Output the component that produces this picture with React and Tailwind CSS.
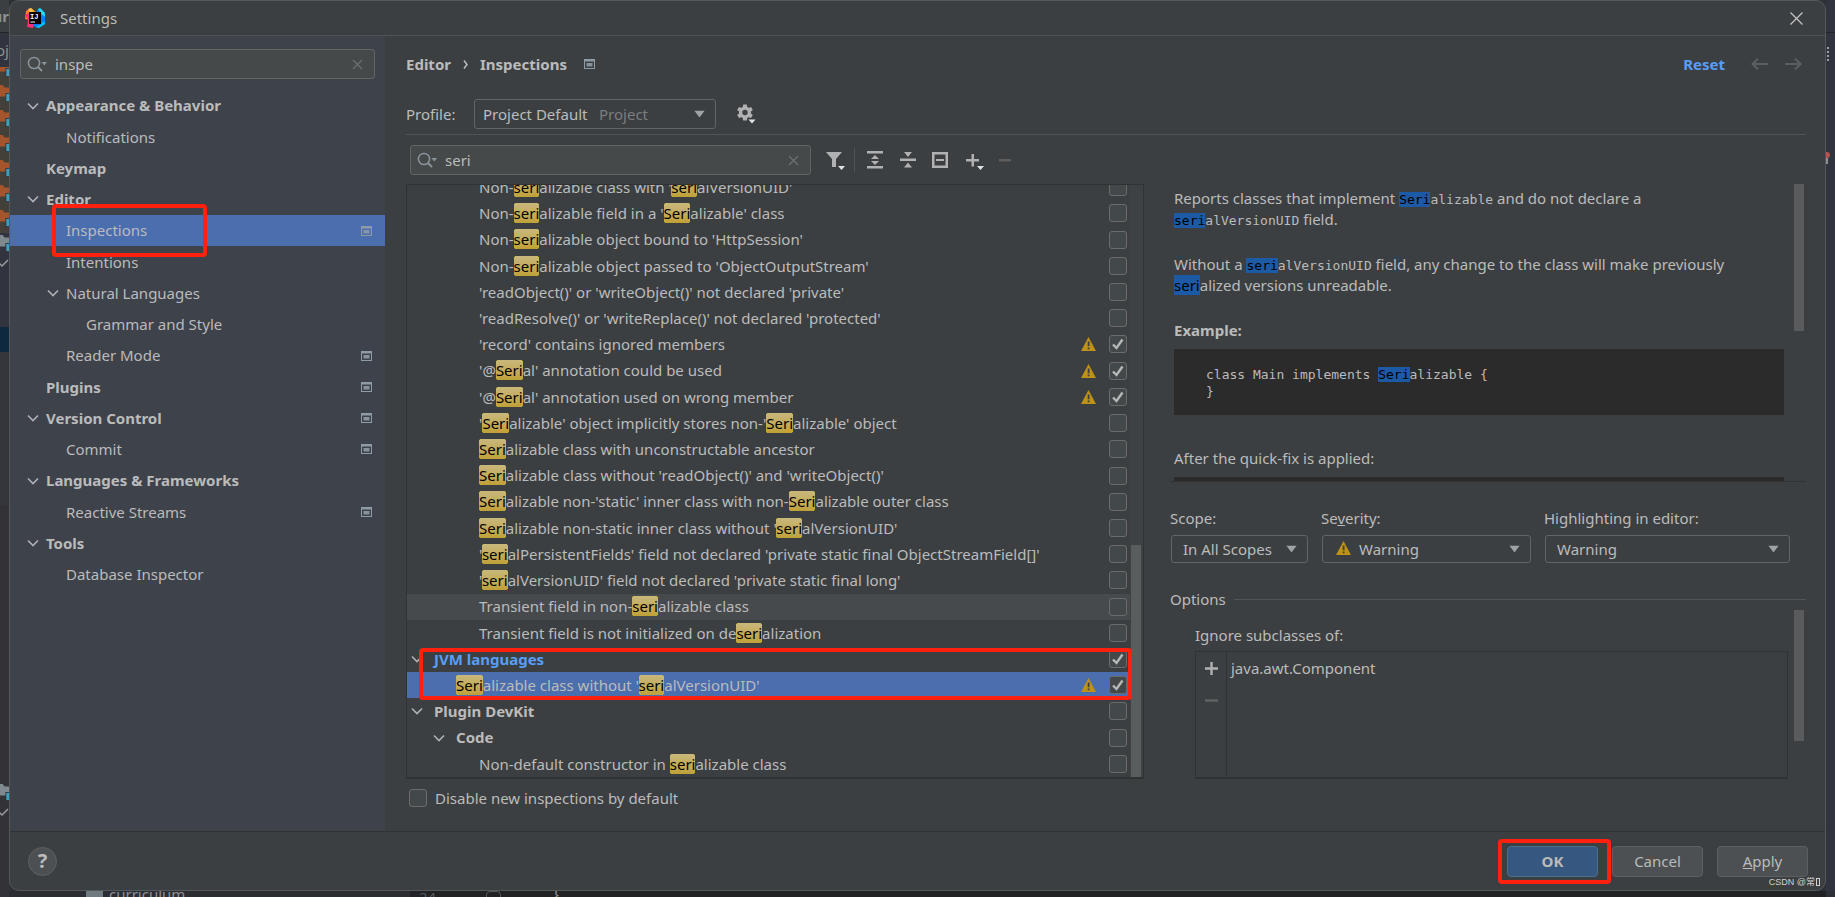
import React from "react";

const settingsTree = [
  { label: "Appearance & Behavior", level: 0, open: true, bold: true },
  { label: "Notifications", level: 1 },
  { label: "Keymap", level: 0, bold: true },
  { label: "Editor", level: 0, open: true, bold: true },
  { label: "Inspections", level: 1, project: true, selected: true },
  { label: "Intentions", level: 1 },
  { label: "Natural Languages", level: 1, open: true },
  { label: "Grammar and Style", level: 2 },
  { label: "Reader Mode", level: 1, project: true },
  { label: "Plugins", level: 0, bold: true, project: true },
  { label: "Version Control", level: 0, open: true, bold: true, project: true },
  { label: "Commit", level: 1, project: true },
  { label: "Languages & Frameworks", level: 0, open: true, bold: true },
  { label: "Reactive Streams", level: 1, project: true },
  { label: "Tools", level: 0, open: true, bold: true },
  { label: "Database Inspector", level: 1 },
];

const inspections = [
  { label: "Non-serializable class with 'serialVersionUID'", level: 2 },
  { label: "Non-serializable field in a 'Serializable' class", level: 2 },
  { label: "Non-serializable object bound to 'HttpSession'", level: 2 },
  { label: "Non-serializable object passed to 'ObjectOutputStream'", level: 2 },
  { label: "'readObject()' or 'writeObject()' not declared 'private'", level: 2 },
  { label: "'readResolve()' or 'writeReplace()' not declared 'protected'", level: 2 },
  { label: "'record' contains ignored members", level: 2, warning: true, checked: true },
  { label: "'@Serial' annotation could be used", level: 2, warning: true, checked: true },
  { label: "'@Serial' annotation used on wrong member", level: 2, warning: true, checked: true },
  { label: "'Serializable' object implicitly stores non-'Serializable' object", level: 2 },
  { label: "Serializable class with unconstructable ancestor", level: 2 },
  { label: "Serializable class without 'readObject()' and 'writeObject()'", level: 2 },
  { label: "Serializable non-'static' inner class with non-Serializable outer class", level: 2 },
  { label: "Serializable non-static inner class without 'serialVersionUID'", level: 2 },
  { label: "'serialPersistentFields' field not declared 'private static final ObjectStreamField[]'", level: 2 },
  { label: "'serialVersionUID' field not declared 'private static final long'", level: 2 },
  { label: "Transient field in non-serializable class", level: 2, hovered: true },
  { label: "Transient field is not initialized on deserialization", level: 2 },
  { label: "JVM languages", level: 0, open: true, modified: true, checked: true, marked: true },
  { label: "Serializable class without 'serialVersionUID'", level: 1, selected: true, warning: true, checked: true },
  { label: "Plugin DevKit", level: 0, open: true },
  { label: "Code", level: 1, open: true },
  { label: "Non-default constructor in serializable class", level: 2 },
];

const treeIndent = ["pl-[17px]", "pl-[37px]", "pl-[57px]"];
const listIndent = ["pl-[4px]", "pl-[26px]", "pl-[49px]"];

const highlight = (text, className) =>
  text
    .split(/(seri)/i)
    .map((part, i) =>
      /^seri$/i.test(part) ? (
        <mark key={i} className={className}>
          {part}
        </mark>
      ) : (
        part
      )
    );

const listMark =
  "rounded-[3px] bg-gradient-to-b from-[#c9b87c] to-[#c0a136] text-black";
const docMark = "bg-[#1c5aa6] text-black";

const Chevron = () => (
  <svg className="h-3 w-3 shrink-0" viewBox="0 0 12 12" fill="none" stroke="#afb1b3" strokeWidth="1.6">
    <path d="M1 3.5 6 8.5 11 3.5" />
  </svg>
);

const ProjectIcon = () => (
  <svg className="h-[10px] w-[11px] shrink-0" viewBox="0 0 11 10">
    <path fill="#8e9ba5" d="M0 0h11v10H0zM1 2.5V9h9V2.5z" fillRule="evenodd" />
    <path fill="#8e9ba5" fillOpacity="0.9" d="M2.5 4h6v3.5h-6z" />
  </svg>
);

const WarningIcon = () => (
  <svg className="h-[14px] w-[15px] shrink-0" viewBox="0 0 15 14">
    <path fill="#be9117" d="M7.5 0 15 14H0z" />
    <path fill="#3c3f41" d="M6.7 4.5h1.8v4.8H6.7zM6.7 10.4h1.8v1.8H6.7z" />
  </svg>
);

const SearchIcon = () => (
  <svg className="h-4 w-5 shrink-0" viewBox="0 0 20 16" fill="none">
    <circle cx="7" cy="7" r="5.6" stroke="#8a949b" strokeWidth="1.5" />
    <path d="M11 11 15 15" stroke="#8a949b" strokeWidth="1.8" />
    <path d="M14.5 6h5.5l-2.75 3.5z" fill="#8a949b" />
  </svg>
);

const DownArrow = () => (
  <svg
    className="pointer-events-none absolute top-1/2 right-[11px] h-[7px] w-[11px] -translate-y-1/2"
    viewBox="0 0 12 8"
  >
    <path d="M0 0h12L6 8z" fill="#a0a3a5" />
  </svg>
);

const SearchField = ({ label, value, className }) => (
  <div
    className={`flex h-[30px] items-center rounded-[3px] border border-[#646464] bg-[#45494a] pr-[11px] pl-[6px] ${className}`}
  >
    <SearchIcon />
    <input
      aria-label={label}
      defaultValue={value}
      className="ml-2 min-w-0 flex-1 bg-transparent text-[15px] text-[#bbbbbb] outline-none"
    />
    <button aria-label={`Clear ${label}`}>
      <svg className="h-[11px] w-[11px]" viewBox="0 0 11 11" stroke="#6b7072" strokeWidth="1.2">
        <path d="M1 1 10 10M10 1 1 10" />
      </svg>
    </button>
  </div>
);

const CheckBox = ({ id, label, checked }) => (
  <span className="relative flex h-[18px] w-[18px] shrink-0">
    <input
      id={id}
      type="checkbox"
      aria-label={label}
      defaultChecked={checked}
      className="peer h-[18px] w-[18px] appearance-none rounded-[3px] border border-[#6b6b6b] bg-[#43494a]"
    />
    <svg
      className="pointer-events-none absolute inset-0 hidden h-[18px] w-[18px] peer-checked:block"
      viewBox="0 0 18 18"
      fill="none"
      stroke="#b6b8b9"
      strokeWidth="2.4"
    >
      <path d="M4 9.5 7.5 13 13.5 4.5" />
    </svg>
  </span>
);

const Select = ({ id, label, value, className, children }) => (
  <div className={`relative ${className}`}>
    <select
      id={id}
      aria-label={label}
      className={`h-full w-full appearance-none rounded-[3px] border border-[#646464] bg-[#3c3f41] text-[15px] text-[#bbbbbb] outline-none ${
        id === "severity" ? "pl-[36px]" : id === "profile" ? "pl-[8px]" : "pl-[11px]"
      }`}
    >
      <option>{value}</option>
    </select>
    {children}
    <DownArrow />
  </div>
);

const Callout = ({ className }) => (
  <span
    className={`pointer-events-none absolute z-10 rounded-[4px] border-4 border-[#ff2010] ${className}`}
  />
);

const ToolIcon = ({ label, wide, children }) => (
  <button aria-label={label} className="shrink-0">
    <svg className={wide ? "h-5 w-5" : "h-5 w-4"} viewBox={wide ? "0 0 20 20" : "0 0 16 20"} fill="#afb1b3">
      {children}
    </svg>
  </button>
);

const Code = ({ children }) => (
  <code className="font-['DejaVu_Sans_Mono',monospace] text-[13px] leading-none">
    {highlight(children, docMark)}
  </code>
);

const Logo = () => (
  <svg className="h-5 w-5" viewBox="0 0 20 20">
    <path fill="#fc801d" d="M1 3 6 0l5 4-6 8-5-1z" />
    <path fill="#f5c34a" d="M3 1 6 0l3 3-4 2z" />
    <path fill="#fe2f74" d="M0 7 4 5l5 9-1 6-6-1 1-7z" />
    <path fill="#087cfa" d="M12 2 15 0l5 5v11l-6 4-6-2z" />
    <path fill="#21d7f4" d="m13 1 2-1 5 5v4l-4-3z" />
    <path fill="#07c3f2" d="m15 17 4-4 1 3-6 4-4-1z" />
    <path fill="#000" d="M4 4h12v12H4z" />
    <path fill="#fff" d="M5.5 13.5H10v1H5.5z" />
    <text x="5" y="10.5" fill="#fff" fontSize="7" fontWeight="700" fontFamily="Liberation Mono, monospace">
      IJ
    </text>
  </svg>
);

const Folder = ({ className }) => (
  <div className="flex h-[25px] shrink-0 items-start">
    <svg className="h-5 w-[10px]" viewBox="0 0 10 20">
      <path className={className} d="M0 1h3l2 3h5v10H0z" />
      <path fill="#31343e" d="M6 10h4v10H6z" />
      <path fill="#3d9fc0" d="M7 11h3v8H7z" />
    </svg>
  </div>
);

const EditorLeft = () => (
  <div className="flex flex-col overflow-hidden bg-[#31343e]">
    <div className="flex h-[33px] shrink-0 items-center justify-end border-b border-[#232528] bg-[#3c3f41] text-[15px] font-bold text-[#8e9092]">
      ur
    </div>
    <div className="flex h-[34px] shrink-0 items-center justify-end text-[15px] text-[#8e9092]">oj</div>
    <div className="flex h-[166px] shrink-0 flex-col justify-end overflow-hidden bg-[#424039]">
      {[1, 2, 3, 4, 5, 6, 7].map((n) => (
        <Folder key={n} className="fill-[#a5552b]" />
      ))}
    </div>
    <Folder className="fill-[#7f8a90]" />
    <svg className="h-3 w-[10px] shrink-0" viewBox="0 0 10 12" fill="none" stroke="#9a9c9e" strokeWidth="1.5">
      <path d="M-2 4 2 8 8 2" />
    </svg>
    <div className="mt-[57px] h-[25px] shrink-0 bg-[#0e293f]" />
    <div className="h-[153px] shrink-0 bg-[#34363b]" />
    <div className="flex flex-1 flex-col justify-end bg-[#333237] pb-[72px]">
      <Folder className="fill-[#7f8a90]" />
      <svg className="h-3 w-[10px] shrink-0" viewBox="0 0 10 12" fill="none" stroke="#9a9c9e" strokeWidth="1.5">
        <path d="M-2 4 2 8 8 2" />
      </svg>
    </div>
  </div>
);

const TitleBar = () => (
  <header className="flex h-[35px] shrink-0 items-center border-b border-[#4f5254] pr-[22px] pl-[15px]">
    <Logo />
    <h1 className="ml-[15px] flex-1 text-[15px]">Settings</h1>
    <button aria-label="Close">
      <svg className="h-[13px] w-[13px]" viewBox="0 0 13 13" stroke="#c4c6c7" strokeWidth="1.2">
        <path d="M0.5 0.5 12.5 12.5M12.5 0.5 0.5 12.5" />
      </svg>
    </button>
  </header>
);

const Sidebar = () => (
  <aside className="w-[375px] shrink-0 bg-[#3e424b]">
    <SearchField label="Search settings" value="inspe" className="mx-[10px] mt-[13px]" />
    <ul className="mt-[11px] flex h-[500px] flex-col">
      {settingsTree.map((item) => (
        <li
          key={item.label}
          className={`relative flex flex-1 items-center pr-[13px] ${treeIndent[item.level]} ${
            item.selected ? "bg-[#4b6eaf]" : ""
          }`}
        >
          <span className="flex w-[19px] shrink-0">{item.open && <Chevron />}</span>
          <span className={`flex-1 ${item.bold ? "font-bold" : ""}`}>{item.label}</span>
          {item.project && <ProjectIcon />}
          {item.selected && <Callout className="top-[-11px] left-[42px] h-[53px] w-[155px]" />}
        </li>
      ))}
    </ul>
  </aside>
);

const InspectionRow = ({ item }) => {
  const group = item.open;

  return (
    <li
      className={`relative flex flex-1 items-center pr-[3px] ${listIndent[item.level]} ${
        item.selected ? "bg-[#4b6eaf]" : item.hovered ? "bg-[#464a4d]" : ""
      }`}
    >
      <span className="flex w-[23px] shrink-0">{group && <Chevron />}</span>
      <span
        className={`flex-1 whitespace-nowrap ${group ? "font-bold" : ""} ${
          item.modified ? "text-[#589df6]" : ""
        }`}
      >
        {highlight(item.label, listMark)}
      </span>
      {item.warning && <WarningIcon />}
      <span className="ml-[13px] flex">
        <CheckBox label={item.label} checked={item.checked} />
      </span>
      {item.marked && <Callout className="top-[2px] left-[12px] h-[52px] w-[713px]" />}
    </li>
  );
};

const Toolbar = () => (
  <div className="mt-[10px] flex items-center pl-[4px]">
    <SearchField label="Search inspections" value="seri" className="w-[401px]" />
    <div className="ml-[15px] flex items-center">
      <ToolIcon label="Filter inspections" wide>
        <path d="M0 2h16l-6 7v8H6V9z" />
        <path d="M12 16h7l-3.5 4z" fill="#dfe1e2" />
      </ToolIcon>
      <span className="mr-[12px] ml-[8px] h-6 w-px bg-[#515456]" />
      <ToolIcon label="Expand all">
        <path d="M0 1h16v2.5H0zM0 16h16v2.5H0zM8 5l4 4H4zM8 15l4-4H4z" />
      </ToolIcon>
      <span className="w-[17px]" />
      <ToolIcon label="Collapse all">
        <path d="M0 8.5h16V11H0zM8 7l4-5H4zM8 12.5l4 5H4z" />
      </ToolIcon>
      <span className="w-[16px]" />
      <ToolIcon label="Reset to empty">
        <path d="M0 2h16v16H0zM2.5 4.5v11h11v-11z" fillRule="evenodd" />
        <path d="M4 9h8v2H4z" />
      </ToolIcon>
      <span className="w-[18px]" />
      <ToolIcon label="Add inspection" wide>
        <path d="M5.5 4h2.5v5H13v2.5H8v5H5.5v-5H0V9h5.5z" />
        <path d="M11 16h7l-3.5 4z" fill="#dfe1e2" />
      </ToolIcon>
      <span className="w-[12px]" />
      <ToolIcon label="Remove inspection">
        <path d="M1 9h12v2.5H1z" fill="#5f5c5c" />
      </ToolIcon>
    </div>
  </div>
);

const Description = () => (
  <div className="flex h-[298px] shrink-0 overflow-hidden border-b border-[#323232]">
    <div className="min-w-0 flex-1 pl-[4px] leading-[21px]">
      <p className="mt-[4px] max-w-[580px]">
        Reports classes that implement <Code>Serializable</Code> and do not declare a{" "}
        <Code>serialVersionUID</Code> field.
      </p>
      <p className="mt-[24px] max-w-[580px]">
        Without a <Code>serialVersionUID</Code> field, any change to the class will make previously{" "}
        {highlight("serialized versions unreadable.", docMark)}
      </p>
      <h3 className="mt-[24px] font-bold">Example:</h3>
      <pre className="mt-[8px] h-[66px] bg-[#2b2b2b] pt-[17px] pl-[32px] font-['DejaVu_Sans_Mono',monospace] text-[13px] leading-[17px]">
        <span className="block">{highlight("class Main implements Serializable {", docMark)}</span>
        <span className="block">{"}"}</span>
      </pre>
      <p className="mt-[33px]">After the quick-fix is applied:</p>
      <pre className="mt-[8px] h-[66px] bg-[#2b2b2b]" />
    </div>
    <div className="ml-[10px] w-[12px] shrink-0">
      <div className="h-[147px] w-[10px] bg-[#595b5d]" />
    </div>
  </div>
);

const Details = () => (
  <section className="flex min-w-0 flex-1 flex-col">
    <Description />
    <div className="mt-[26px] flex gap-[13px]">
      <div>
        <label htmlFor="scope" className="block leading-[21px]">
          Scope:
        </label>
        <Select id="scope" value="In All Scopes" className="mt-[6px] ml-px h-[28px] w-[137px]" />
      </div>
      <div>
        <label htmlFor="severity" className="block leading-[21px]">
          Se<u>v</u>erity:
        </label>
        <Select id="severity" value="Warning" className="mt-[6px] ml-px h-[28px] w-[209px]">
          <span className="pointer-events-none absolute top-[6px] left-[14px]">
            <WarningIcon />
          </span>
        </Select>
      </div>
      <div>
        <label htmlFor="highlighting" className="block leading-[21px]">
          Highlighting in editor:
        </label>
        <Select id="highlighting" value="Warning" className="mt-[6px] ml-px h-[28px] w-[245px]" />
      </div>
    </div>
    <h2 className="mt-[25px] flex items-center gap-2 leading-[22px]">
      Options
      <span className="h-px flex-1 bg-[#515456]" />
    </h2>
    <div className="flex flex-1">
      <div className="flex min-w-0 flex-1 flex-col pl-[25px]">
        <h3 className="mt-[14px] leading-[22px]">Ignore subclasses of:</h3>
        <div className="mt-[5px] flex flex-1 border border-b-2 border-[#303233]">
          <div className="flex w-[31px] flex-col items-center gap-[19px] border-r border-[#303233] pt-[10px]">
            <button aria-label="Add class">
              <svg className="h-[13px] w-[13px]" viewBox="0 0 13 13" fill="#afb1b3">
                <path d="M5.3 0h2.4v5.3H13v2.4H7.7V13H5.3V7.7H0V5.3h5.3z" />
              </svg>
            </button>
            <button aria-label="Remove class">
              <svg className="h-[13px] w-[13px]" viewBox="0 0 13 13" fill="#606364">
                <path d="M0 5.3h13v2.4H0z" />
              </svg>
            </button>
          </div>
          <p className="pt-[5px] pl-[4px] leading-[22px]">java.awt.Component</p>
        </div>
      </div>
      <div className="ml-[6px] w-[12px] shrink-0">
        <div className="h-[131px] w-[10px] bg-[#595b5d]" />
      </div>
    </div>
  </section>
);

const Content = () => (
  <main className="flex min-w-0 flex-1 flex-col pr-[19px] pl-[21px]">
    <nav className="mt-[17px] flex h-[22px] shrink-0 items-center font-bold">
      <span>Editor</span>
      <svg className="mx-[12px] h-[9px] w-[5px]" viewBox="0 0 5 9" fill="none" stroke="#bbbbbb" strokeWidth="1.5">
        <path d="M1 0.5 4 4.5 1 8.5" />
      </svg>
      <span>Inspections</span>
      <span className="ml-[17px] flex-1">
        <ProjectIcon />
      </span>
      <a href="#reset" className="text-[#589df6]">
        Reset
      </a>
      <button aria-label="Back" className="ml-[26px]">
        <svg className="h-3 w-[17px]" viewBox="0 0 17 12" fill="none" stroke="#5c5f61" strokeWidth="2">
          <path d="M17 6H1.5M7 0.7 1.5 6 7 11.3" />
        </svg>
      </button>
      <button aria-label="Forward" className="mr-[4px] ml-[17px]">
        <svg className="h-3 w-[17px]" viewBox="0 0 17 12" fill="none" stroke="#5c5f61" strokeWidth="2">
          <path d="M0 6h15.5M10 0.7 15.5 6 10 11.3" />
        </svg>
      </button>
    </nav>
    <div className="mt-[24px] flex shrink-0 items-center border-b border-[#515456] pb-[5px]">
      <label htmlFor="profile" className="w-[68px]">
        Profile:
      </label>
      <Select id="profile" value="Project Default" className="h-[30px] w-[242px]">
        <span className="pointer-events-none absolute top-[4px] left-[125px] leading-[22px] text-[#7b7d7e]">
          Project
        </span>
      </Select>
      <button aria-label="Profile actions" className="ml-[21px]">
        <svg className="h-5 w-5" viewBox="0 0 20 20">
          <g fill="#afb1b3">
            <path
              fillRule="evenodd"
              d="M8 2.5a6 6 0 1 0 0 12 6 6 0 0 0 0-12zm0 3.3a2.7 2.7 0 1 1 0 5.4 2.7 2.7 0 0 1 0-5.4z"
            />
            <path d="M6.2 0.5h3.6l0.5 3H5.7zM6.2 16.5h3.6l0.5-3H5.7zM0.2 6.1 2 3l2.8 1.1-2.3 4zM15.8 6.1 14 3l-2.8 1.1 2.3 4zM0.2 10.9 2 14l2.8-1.1-2.3-4zM15.8 10.9 14 14l-2.8-1.1 2.3-4z" />
          </g>
          <path d="M11.5 15.5h7l-3.5 4z" fill="#dfe1e2" />
        </svg>
      </button>
    </div>

    <div className="flex min-h-0 flex-1 gap-[26px]">
      <section className="flex w-[738px] shrink-0 flex-col">
        <Toolbar />
        <div className="mt-[9px] flex min-h-0 flex-1 overflow-hidden border border-b-2 border-[#303233]">
          <ul className="-mt-[11px] flex flex-1 flex-col">
            {inspections.map((item) => (
              <InspectionRow key={item.label} item={item} />
            ))}
          </ul>
          <div className="flex w-[13px] flex-col justify-end bg-[#3f4244] pl-[1px]">
            <div className="h-[232px] w-[10px] bg-[#595d5e]" />
          </div>
        </div>
      </section>
      <div className="flex min-w-0 flex-1 pt-[49px]">
        <Details />
      </div>
    </div>

    <div className="mt-[8px] mb-[22px] flex h-[22px] shrink-0 items-center gap-[8px] pl-[3px]">
      <CheckBox id="disable-new" label="Disable new inspections by default" />
      <label htmlFor="disable-new">Disable new inspections by default</label>
    </div>
  </main>
);

const Footer = () => (
  <footer className="relative flex h-[59px] shrink-0 items-center border-t border-[#303233] pr-[17px] pl-[18px]">
    <button
      aria-label="Help"
      className="h-[29px] w-[29px] rounded-full border border-[#5e6060] bg-[#4c5052] text-[20px] leading-[26px] font-bold"
    >
      ?
    </button>
    <div className="ml-auto flex gap-[14px]">
      <div className="relative">
        <button className="h-[31px] w-[91px] rounded-[4px] border border-[#4c708c] bg-[#365880] font-bold">
          OK
        </button>
        <Callout className="top-[-7px] left-[-9px] h-[45px] w-[113px]" />
      </div>
      <button className="h-[31px] w-[91px] rounded-[4px] border border-[#5e6060] bg-[#4c5052]">Cancel</button>
      <button className="h-[31px] w-[91px] rounded-[4px] border border-[#5e6060] bg-[#4c5052]">
        <u>A</u>pply
      </button>
    </div>
    <span className="absolute right-[5px] bottom-[1px] flex items-center font-['Liberation_Sans','Noto_Sans_CJK_SC',sans-serif] text-[9px] leading-[14px] text-[#d0d0d0]">
      CSDN @常
      <span className="ml-[1px] h-[8px] w-[4px] border border-[#d0d0d0]" />
    </span>
  </footer>
);

const App = () => (
  <div className="grid h-screen grid-cols-[9px_1fr_9px] grid-rows-[1fr_6px] overflow-hidden bg-[#2e3038] font-['Noto_Sans','Open_Sans',sans-serif] text-[15px] text-[#bbbbbb]">
    <EditorLeft />
    <div className="flex min-h-0 min-w-0 flex-col overflow-hidden rounded-[10px] border border-[#55585a] bg-[#3c3f41]">
      <TitleBar />
      <div className="flex min-h-0 flex-1">
        <Sidebar />
        <Content />
      </div>
      <Footer />
    </div>
    <div className="flex flex-col overflow-hidden bg-[#31343e]">
      <div className="h-[33px] border-b border-[#232528]" />
      <div className="mt-[14px] h-[14px] w-[3px] border-r-2 border-dotted border-[#9a9c9e]" />
      <div className="mt-[91px] h-[6px] w-[4px] rounded-r-full bg-[#b8504b]" />
      <div className="h-[6px] w-[2px] bg-[#8e9092]" />
    </div>
    <div className="bg-[#333237]" />
    <div className="flex items-start overflow-hidden bg-[#222225] text-[#8e9092]">
      <div className="flex h-full w-[401px] items-start bg-[#2c2d33] pl-[77px]">
        <span className="h-[6px] w-[17px] bg-[#6f7a80]" />
        <span className="ml-[6px] leading-[6px]">curriculum</span>
      </div>
      <span className="ml-[9px] leading-[12px] text-[#55585b]">24</span>
      <span className="ml-[50px] h-[12px] w-[15px] rounded-[4px] border border-[#55585b]" />
      <span className="ml-[52px] leading-[4px]">{"}"}</span>
    </div>
    <div className="bg-[#2e3038]" />
  </div>
);

export default App;
